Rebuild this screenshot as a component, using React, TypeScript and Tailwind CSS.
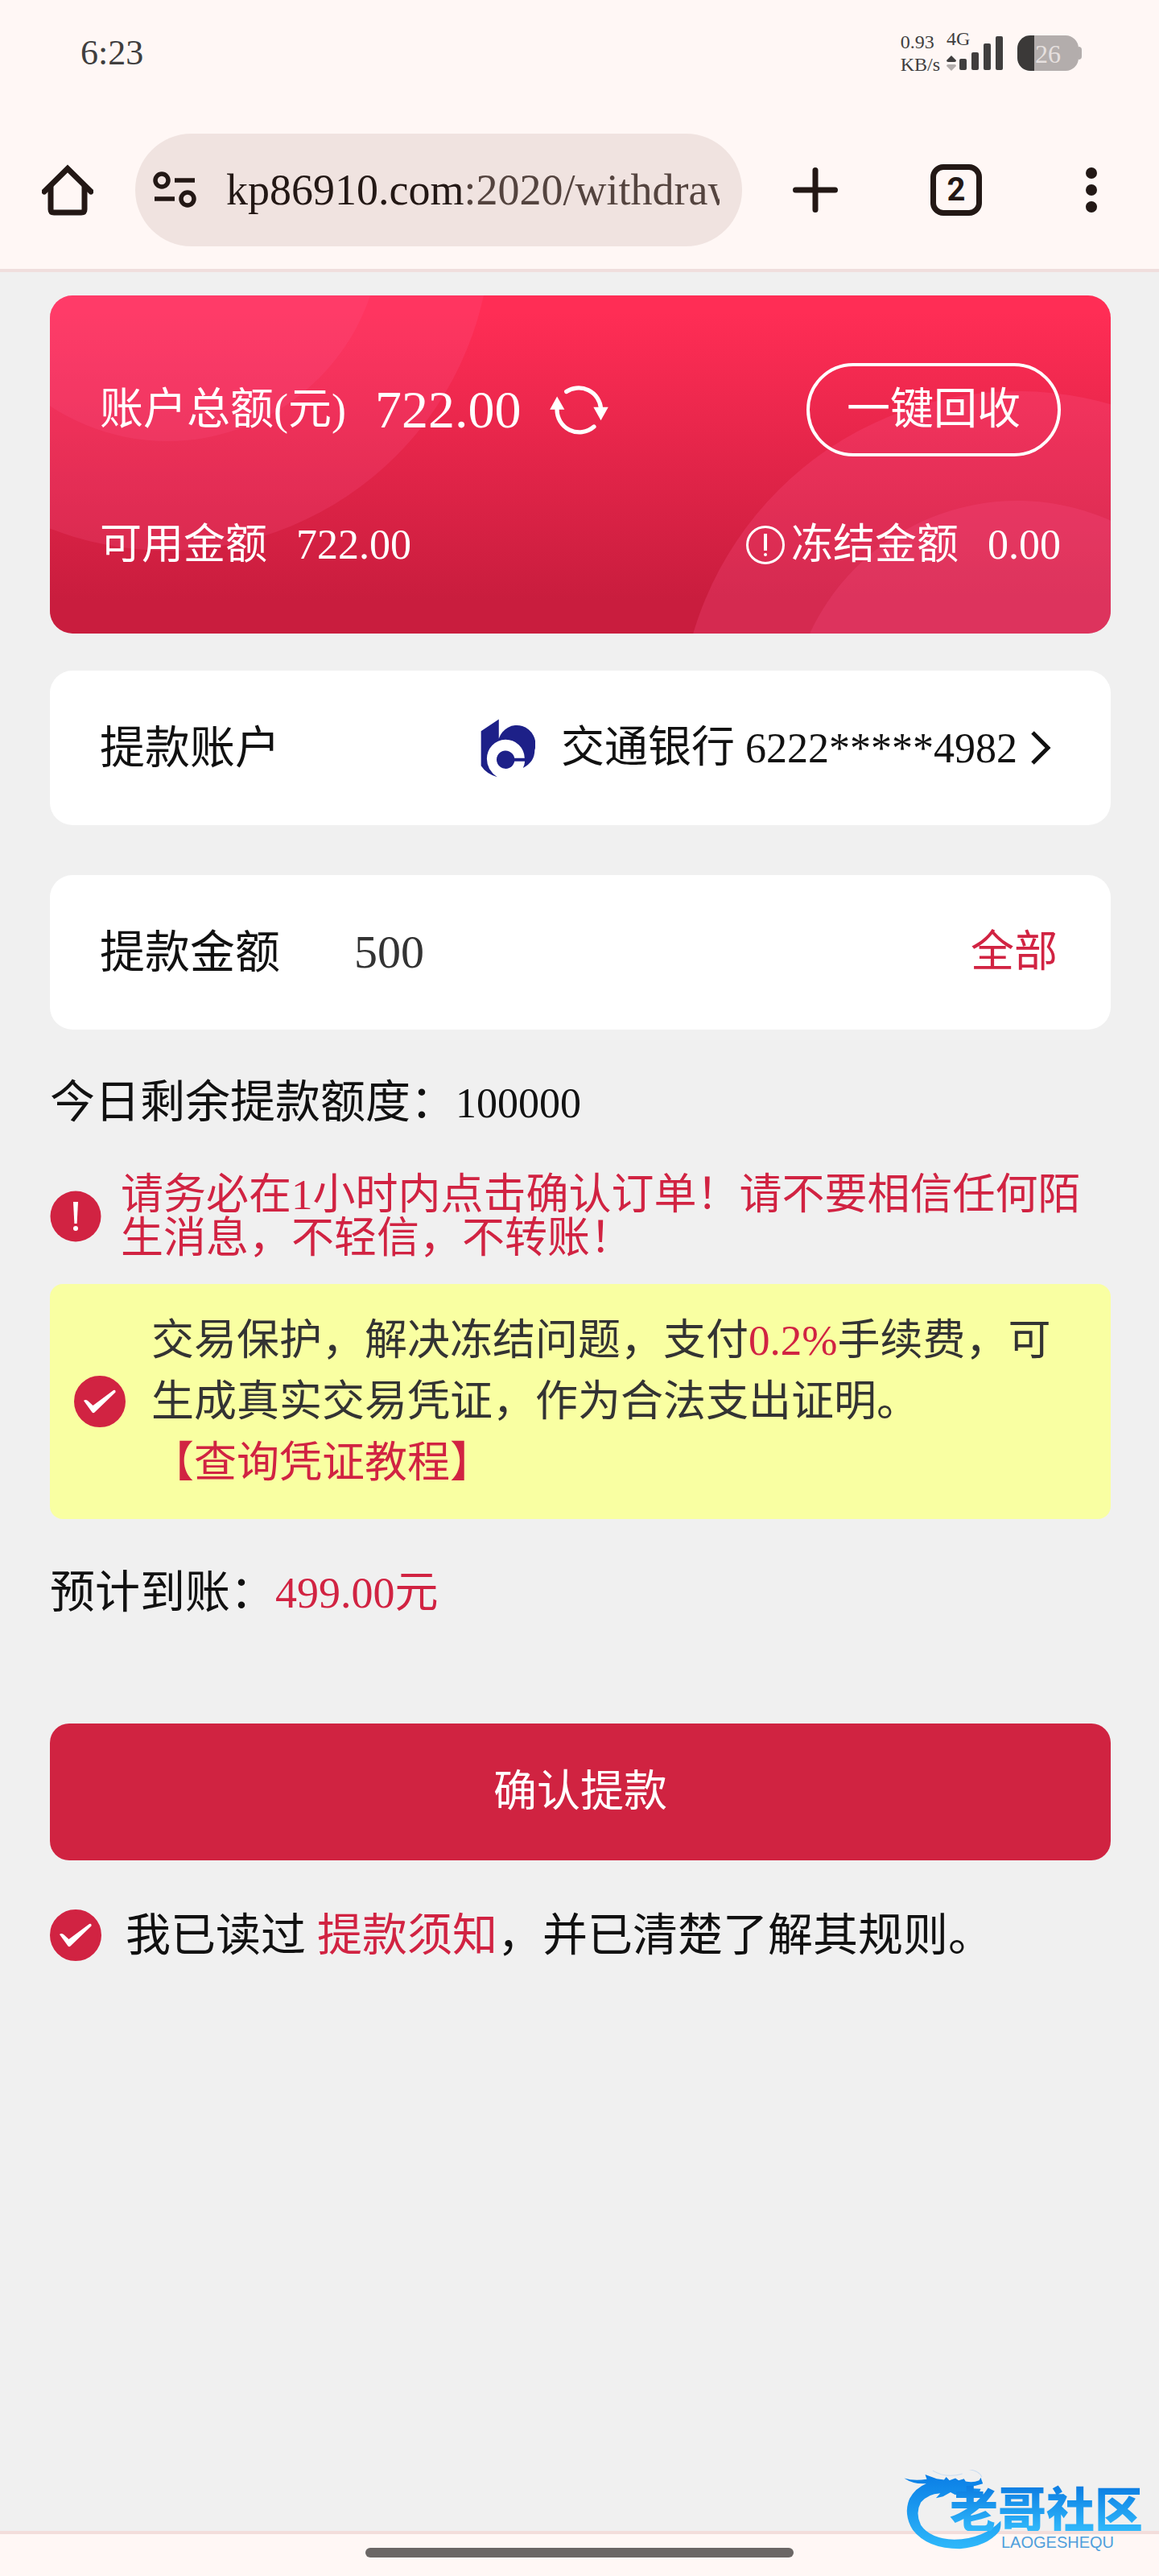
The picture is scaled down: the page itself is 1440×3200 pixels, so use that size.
import { useState } from 'react';

function HomeIcon() {
  return (
    <svg viewBox="0 0 64 64" className="w-16 h-16" fill="none" stroke="#231815" strokeWidth="7">
      <path d="M3 34 L32 5.5 L61 34" strokeLinecap="round" />
      <path d="M11 27 V56 Q11 60 15 60 H49 Q53 60 53 56 V27" />
    </svg>
  );
}

function TuneIcon() {
  return (
    <svg viewBox="0 0 54 46" className="w-[54px] h-[46px] shrink-0" fill="none" stroke="#231815" strokeWidth="5.5">
      <circle cx="11" cy="11" r="8" />
      <path d="M27 11 H52 M2 34 H27" />
      <circle cx="43" cy="34" r="8" />
    </svg>
  );
}

function StatusIcons() {
  const bars = [
    { x: 16, h: 14 },
    { x: 31, h: 22 },
    { x: 46, h: 33 },
    { x: 61, h: 42 },
  ];

  return (
    <svg viewBox="0 0 70 44" className="w-[70px] h-11" fill="#403e3e">
      <path d="M6 25 L12 31 Q12 33 10 33 H2 Q0 33 0 31 Z" />
      <path d="M6 44 L12 38 Q12 36 10 36 H2 Q0 36 0 38 Z" fill="#b3adac" />
      {bars.map((bar) => (
        <rect key={bar.x} x={bar.x} y={43 - bar.h} width="9" height={bar.h} rx="2" />
      ))}
    </svg>
  );
}

function RefreshIcon() {
  return (
    <svg viewBox="42 50 220 188" className="w-[73px] h-[62px]" fill="#fff">
      <g fill="none" stroke="#fff" strokeWidth="16" strokeLinecap="round">
        <path d="M104 76 A84 84 0 0 1 234 138" />
        <path d="M69 140 A84 84 0 0 0 208 208" />
      </g>
      <path d="M206 134 H262 L234 184 Z M42 143 H97 L69 94 Z" />
    </svg>
  );
}

function BankLogo() {
  return (
    <svg viewBox="38 38 206 220" className="w-[68px] h-[73px]" fill="#1d2088">
      <path d="M107 39 L40 84 V214 Q60 245 101 256 Q62 230 62 188 A71 71 0 0 1 204 185 H166 A34 34 0 1 0 166 197 H205 Q204 210 198 222 Q242 200 242 155 A69 70 0 0 0 107 112 Z" />
    </svg>
  );
}

function AlertIcon() {
  return (
    <svg viewBox="0 0 64 64" className="w-16 h-16 shrink-0">
      <circle cx="32" cy="32" r="31.5" fill="#d12342" />
      <path d="M29 14 H35 L33.6 41 H30.4 Z" fill="#fff" />
      <circle cx="32" cy="47" r="3" fill="#fff" />
    </svg>
  );
}

function RoundCheckbox({ id, checked, onChange }: { id: string; checked: boolean; onChange: (value: boolean) => void }) {
  return (
    <span className="relative w-16 h-16 shrink-0">
      <input
        id={id}
        type="checkbox"
        checked={checked}
        onChange={(e) => onChange(e.target.checked)}
        className="block w-16 h-16 appearance-none rounded-full border-4 border-[#d12342] bg-white checked:bg-[#d12342]"
      />
      <svg viewBox="0 0 64 64" className="absolute inset-0 w-16 h-16 pointer-events-none" fill="#fff">
        <path d="M12 31 Q14 29 17 31 L23.5 37 L49 18 Q52 17 51.5 20.5 L25.5 45.5 Q24 47 22.5 45.5 Z" />
      </svg>
    </span>
  );
}

function CardBackground() {
  return (
    <svg viewBox="0 0 1318 420" preserveAspectRatio="none" className="absolute inset-0 w-full h-full" fill="#ff5c93">
      <circle cx="146" cy="-85" r="402" fillOpacity="0.18" />
      <circle cx="146" cy="-85" r="266" fillOpacity="0.16" />
      <circle cx="1202" cy="539" r="420" fillOpacity="0.22" />
      <circle cx="1202" cy="539" r="284" fillOpacity="0.2" />
    </svg>
  );
}

function Watermark() {
  return (
    <div className="absolute right-5 bottom-8 flex">
      <svg viewBox="120 145 370 295" className="w-[124px] h-[99px]">
        <defs>
          <linearGradient id="dragon" x1="0" y1="0" x2="0" y2="1">
            <stop offset="0" stopColor="#0a7ee6" />
            <stop offset="1" stopColor="#2fb8fa" />
          </linearGradient>
        </defs>
        <g fill="url(#dragon)">
          <path d="M124 176 Q160 188 208 180 L202 163 Q220 170 245 178 L272 182 L280 172 L292 184 L314 176 L326 184 L346 178 L352 188 Q380 194 402 184 L408 174 L416 196 Q390 206 362 206 L378 214 L408 216 L400 236 Q376 226 356 224 L350 236 L330 228 L314 238 L296 228 L268 244 L242 250 L258 232 Q212 234 186 266 Q164 306 186 350 Q220 400 310 404 Q420 400 482 334 Q484 360 476 374 Q430 430 330 438 Q210 438 156 368 Q120 310 144 252 Q166 212 206 196 Q160 200 124 176 Z" />
        </g>
        <path d="M230 148 Q280 178 340 160 M330 142 Q400 140 412 172" fill="none" stroke="#c9dcf0" strokeWidth="3" />
      </svg>
      <div className="-ml-[66px] pt-4 flex flex-col gap-1 font-['Noto_Sans_CJK_SC',sans-serif]">
        <span className="text-[60px] leading-[60px] font-black bg-gradient-to-b from-[#0b78e0] to-[#31b9fb] bg-clip-text text-transparent">
          老哥社区
        </span>
        <span className="pl-16 text-[20px] leading-5 text-[#4f9fdc] font-['Liberation_Sans',sans-serif]">LAOGESHEQU</span>
      </div>
    </div>
  );
}

function BrowserHeader() {
  return (
    <header className="bg-[#fff7f5] border-b-4 border-[#f0dedd]">
      <div className="h-[132px] pl-[100px] pr-24 flex items-center justify-between text-[#403e3e]">
        <time className="text-[44px]">6:23</time>
        <div className="flex items-center">
          <div className="flex flex-col text-2xl leading-7">
            <span>0.93</span>
            <span>KB/s</span>
          </div>
          <div className="relative ml-2">
            <StatusIcons />
            <span className="absolute left-0 -top-2 text-2xl leading-6">4G</span>
          </div>
          <div className="ml-[18px] flex items-center">
            <div className="w-[76px] h-11 pl-[22px] rounded-2xl overflow-hidden bg-[linear-gradient(90deg,#3b3938_21px,#b3adac_21px)] text-[32px] leading-[46px] text-[#e6e0df]">
              26
            </div>
            <div className="w-1 h-4 rounded-r bg-[#b3adac]"></div>
          </div>
        </div>
      </div>

      <div className="pt-[34px] pb-7 pl-[52px] flex items-center">
        <button aria-label="主页">
          <HomeIcon />
        </button>
        <div className="ml-[52px] min-w-0 flex-1 h-[140px] pl-[22px] pr-7 flex items-center gap-[37px] rounded-full bg-[#f0e3e0]">
          <TuneIcon />
          <div className="min-w-0 overflow-hidden whitespace-nowrap text-[54px] text-[#231815]">
            kp86910.com<span className="text-[#54443f]">:2020/withdraw</span>
          </div>
        </div>
        <button aria-label="新标签页" className="w-[182px] flex justify-center">
          <svg viewBox="0 0 56 56" className="w-14 h-14" stroke="#231815" strokeWidth="7" strokeLinecap="round">
            <path d="M28 3.5 V52.5 M3.5 28 H52.5" />
          </svg>
        </button>
        <button aria-label="标签页" className="w-[168px] flex justify-center">
          <span className="w-16 h-16 flex items-center justify-center rounded-2xl border-[7px] border-[#231815] text-[#231815] text-[40px] leading-10 font-bold font-['Roboto',sans-serif]">
            2
          </span>
        </button>
        <button aria-label="菜单" className="w-[168px] flex justify-center">
          <svg viewBox="0 0 14 56" className="w-[14px] h-14" fill="#231815">
            <circle cx="7" cy="7" r="7" />
            <circle cx="7" cy="28" r="7" />
            <circle cx="7" cy="49" r="7" />
          </svg>
        </button>
      </div>
    </header>
  );
}

export default function App() {
  const [amount, setAmount] = useState('500');
  const [protect, setProtect] = useState(true);
  const [agreed, setAgreed] = useState(true);

  return (
    <div lang="zh-CN" className="relative min-h-screen flex flex-col bg-[#f0f0f0] text-[56px] leading-[76px] text-[#111] font-['Liberation_Serif','Noto_Sans_CJK_SC',serif]">
      <BrowserHeader />

      <main className="flex-1 pl-[62px] pr-[60px] pt-[29px]">
        <section className="relative h-[420px] px-[62px] pt-[84px] rounded-[28px] overflow-hidden text-white bg-gradient-to-b from-[#ff2d55] from-5% to-[#c91d3e] to-90%">
          <CardBackground />
          <div className="relative h-[116px] flex items-center justify-between text-[54px]">
            <div className="flex items-center gap-9">
              <span>账户总额(元)</span>
              <span className="text-[66px]">722.00</span>
              <button aria-label="刷新">
                <RefreshIcon />
              </button>
            </div>
            <button className="w-[316px] h-full rounded-full border-4 border-white">一键回收</button>
          </div>
          <div className="relative mt-[72px] flex items-center justify-between text-[52px]">
            <div className="flex items-center gap-9">
              <span>可用金额</span>
              <span>722.00</span>
            </div>
            <div className="flex items-center">
              <svg viewBox="0 0 48 48" className="w-12 h-12 mr-2" fill="none" stroke="#fff" strokeWidth="3">
                <circle cx="24" cy="24" r="22.5" />
                <path d="M24 10 V31" strokeWidth="4" />
                <circle cx="24" cy="36" r="2" fill="#fff" stroke="none" />
              </svg>
              <span>冻结金额</span>
              <span className="ml-9">0.00</span>
            </div>
          </div>
        </section>

        <section className="mt-[46px] h-48 px-[62px] flex items-center justify-between rounded-[28px] bg-white">
          <span>提款账户</span>
          <button className="flex items-center text-[52px]">
            <BankLogo />
            <span className="ml-8 mr-4">
              <span className="text-[54px]">交通银行</span> 6222*****4982
            </span>
            <svg viewBox="0 0 26 42" className="w-[26px] h-[42px] mr-3" fill="none" stroke="#111" strokeWidth="5">
              <path d="M3 2 L22 21 L3 40" />
            </svg>
          </button>
        </section>

        <section className="mt-[62px] h-48 px-[62px] flex items-center rounded-[28px] bg-white">
          <label htmlFor="amount">提款金额</label>
          <input
            id="amount"
            type="text"
            inputMode="decimal"
            value={amount}
            onChange={(e) => setAmount(e.target.value)}
            className="ml-[92px] min-w-0 flex-1 text-[58px] text-[#333] focus:outline-none"
          />
          <button className="mr-1 text-[54px] text-[#d12342]" onClick={() => setAmount('722.00')}>
            全部
          </button>
        </section>

        <p className="mt-[52px]">
          今日剩余提款额度：<span className="text-[52px]">100000</span>
        </p>

        <div className="mt-12 flex items-center gap-6 text-[53px] text-[#d12342]">
          <AlertIcon />
          <p className="leading-[54px]">请务必在1小时内点击确认订单！请不要相信任何陌生消息，不轻信，不转账！</p>
        </div>

        <section className="mt-[30px] h-[292px] pl-[30px] flex items-center gap-8 rounded-2xl bg-[#f9ffa2] text-[53px] text-[#333]">
          <RoundCheckbox id="protect" checked={protect} onChange={setProtect} />
          <label htmlFor="protect">
            交易保护，解决冻结问题，支付<span className="text-[#d12342]">0.2%</span>手续费，可
            <br />
            生成真实交易凭证，作为合法支出证明。
            <br />
            <a href="#tutorial" className="text-[#d12342]">
              【查询凭证教程】
            </a>
          </label>
        </section>

        <p className="mt-[53px]">
          预计到账：<span className="text-[54px] text-[#d12342]">499.00元</span>
        </p>

        <button className="mt-[124px] w-full h-[170px] rounded-3xl bg-[#d02341] text-[54px] text-white">确认提款</button>

        <div className="mt-[55px] flex items-center gap-[30px]">
          <RoundCheckbox id="agree" checked={agreed} onChange={setAgreed} />
          <label htmlFor="agree">
            我已读过{' '}
            <a href="#rules" className="text-[#d12342]">
              提款须知
            </a>
            ，并已清楚了解其规则。
          </label>
        </div>
      </main>

      <footer className="h-14 pt-[17px] border-t-4 border-[#f3dddb] bg-[#fff7f5]">
        <div className="mx-auto w-[37%] h-3 rounded-full bg-[#6b6665]"></div>
      </footer>

      <Watermark />
    </div>
  );
}
